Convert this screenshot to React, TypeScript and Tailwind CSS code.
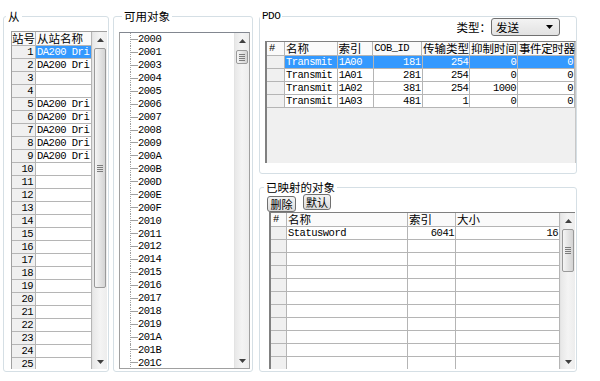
import React from "react";

const CJK = "font-['Noto_Sans_CJK_SC',sans-serif] text-[11.5px]";
const MONO = "font-['Liberation_Mono',monospace] text-[10.5px] tracking-[-0.5px]";
const LINE = "border-[#b5b5b5]";
const GROUP = "m-0 p-0 rounded-[3px] border border-[#d5dfe5] min-w-0";

function Arrow({ down }: { down?: boolean }) {
  return (
    <div className="flex h-[15px] shrink-0 items-center justify-center">
      <svg width="7" height="4" viewBox="0 0 7 4">
        <path d={down ? "M0 0H7L3.5 4Z" : "M0 4H7L3.5 0Z"} fill="#404040" />
      </svg>
    </div>
  );
}

function ScrollBar({ gap, thumb }: { gap: string; thumb: string }) {
  return (
    <div className="flex h-full w-[15px] shrink-0 flex-col border-l border-[#e3e3e3] bg-gradient-to-r from-[#e8e8e8] via-[#f4f4f4] to-[#ededed]">
      <Arrow />
      <div
        className={`${gap} ${thumb} mx-[1px] flex shrink-0 items-center justify-center rounded-[2px] border border-[#9a9a9a] bg-gradient-to-r from-[#f5f5f5] to-[#d4d4d4]`}
      >
        <div className="flex flex-col gap-[1px]">
          {[0, 1, 2, 3].map((i) => (
            <div key={i} className="h-px w-[6px] bg-[#7c7c7c]" />
          ))}
        </div>
      </div>
      <div className="flex-1" />
      <Arrow down />
    </div>
  );
}

const slaves = Array.from({ length: 25 }, (_, i) => ({
  no: i + 1,
  name: [1, 2, 5, 6, 7, 8, 9].includes(i + 1) ? "DA200 Dri" : "",
}));

const objects = [
  "2000", "2001", "2003", "2004", "2005", "2006", "2007", "2008", "2009",
  "200A", "200B", "200D", "200E", "200F", "2010", "2011", "2012", "2014",
  "2015", "2016", "2017", "2018", "2019", "201A", "201B", "201C",
];

const pdoCols = [
  { t: "名称", w: "w-[53px]", right: false, mono: false },
  { t: "索引", w: "w-[36px]", right: false, mono: false },
  { t: "COB_ID", w: "w-[49px]", right: true, mono: true },
  { t: "传输类型", w: "w-[48px]", right: true, mono: false },
  { t: "抑制时间", w: "w-[48px]", right: true, mono: false },
  { t: "事件定时器", w: "w-[57px]", right: true, mono: false },
];

const pdoRows = [
  ["Transmit", "1A00", "181", "254", "0", "0"],
  ["Transmit", "1A01", "281", "254", "0", "0"],
  ["Transmit", "1A02", "381", "254", "1000", "0"],
  ["Transmit", "1A03", "481", "1", "0", "0"],
];

const mapCols = [
  { t: "名称", w: "w-[121px]", right: false },
  { t: "索引", w: "w-[48px]", right: true },
  { t: "大小", w: "w-[104px]", right: true },
];

const mapRows = [["Statusword", "6041", "16"], ...Array.from({ length: 10 }, () => ["", "", ""])];

function Btn({ label, cls }: { label: string; cls: string }) {
  return (
    <div
      className={`${cls} flex h-[16px] items-center justify-center whitespace-nowrap rounded-[3px] border border-[#707070] bg-gradient-to-b from-[#f4f4f4] to-[#dcdcdc] font-['Noto_Sans_CJK_SC',sans-serif] text-[11px] leading-[12px]`}
    >
      {label}
    </div>
  );
}

export default function App() {
  return (
    <div className="flex h-[381px] w-[600px] items-start overflow-hidden bg-white pt-[9px] text-black">
      {/* 从 */}
      <fieldset className={`${GROUP} ml-[3px] h-[363px] w-[106px]`}>
        <legend className={`ml-[2px] px-[2px] leading-[14px] ${CJK}`}>从</legend>
        <div className="ml-[7px] mt-[8px] flex h-[338px] w-[96px] overflow-hidden border-l border-t border-[#a0a0a0]">
          <div className="w-[80px] bg-white">
            <div className="flex h-[14px]">
              <div className={`w-[24px] whitespace-nowrap border-b border-r ${LINE} bg-[#fafafa] leading-[13px] ${CJK}`}>站号</div>
              <div className={`flex-1 whitespace-nowrap border-b border-r ${LINE} bg-[#fafafa] pl-[1px] leading-[13px] ${CJK}`}>
                从站名称
              </div>
            </div>
            {slaves.map((s) => (
              <div key={s.no} className="flex h-[13px]">
                <div className={`w-[24px] border-b border-r ${LINE} bg-[#f0f0f0] pr-[2px] text-right leading-[12px] ${MONO}`}>
                  {s.no}
                </div>
                <div
                  className={`flex-1 overflow-hidden whitespace-nowrap border-b border-r ${LINE} pl-[1px] leading-[12px] ${MONO} ${
                    s.no === 1 ? "bg-[#3399ff] text-white" : ""
                  }`}
                >
                  {s.name}
                </div>
              </div>
            ))}
          </div>
          <ScrollBar gap="mt-[1px]" thumb="h-[240px]" />
        </div>
      </fieldset>

      {/* 可用对象 */}
      <fieldset className={`${GROUP} ml-[4px] h-[363px] w-[140px]`}>
        <legend className={`ml-[8px] px-[2px] leading-[14px] ${CJK}`}>可用对象</legend>
        <div className="ml-[5px] mt-[9px] flex h-[337px] w-[131px] border border-[#a0a0a0] border-t-[#828790]">
          <div className="flex-1 overflow-hidden">
            {objects.map((o) => (
              <div key={o} className="flex h-[12.95px] items-center">
                <div className="ml-[10px] flex h-full w-[8px] items-center border-l border-dotted border-[#a0a0a0]">
                  <div className="w-full border-t border-[#a0a0a0]" />
                </div>
                <span className={`leading-[12px] ${MONO}`}>{o}</span>
              </div>
            ))}
          </div>
          <ScrollBar gap="mt-[2px]" thumb="h-[14px]" />
        </div>
      </fieldset>

      <div className="ml-[6px] flex w-[318px] flex-col">
        {/* PDO */}
        <fieldset className={`${GROUP} h-[165px] w-[318px]`}>
          <legend className="px-[2px] font-['Liberation_Mono',monospace] text-[11px] leading-[14px] tracking-[-0.5px]">PDO</legend>
          <div className="-mt-[5px] flex items-center justify-end pr-[16px]">
            <span className={`${CJK} leading-[14px]`}>类型：</span>
            <div className="flex h-[18px] w-[69px] items-center justify-between rounded-[3px] border border-[#707070] bg-gradient-to-b from-[#f3f3f3] to-[#e2e2e2] pl-[4px] pr-[6px]">
              <span className={`${CJK} leading-[14px]`}>发送</span>
              <svg width="7" height="4" viewBox="0 0 7 4">
                <path d="M0 0H7L3.5 4Z" fill="#000" />
              </svg>
            </div>
          </div>
          <div className="ml-[5px] mt-[5px] h-[122px] w-[311px] overflow-hidden border-l-2 border-r border-t border-[#808080] border-r-[#c8c8c8] bg-[#f0f0f0]">
            <div className="flex h-[14px] bg-[#fafafa]">
              <div className={`w-[18px] border-b border-r ${LINE} pl-[2px] leading-[13px] ${MONO}`}>#</div>
              {pdoCols.map((c) => (
                <div
                  key={c.t}
                  className={`${c.w} whitespace-nowrap border-b border-r ${LINE} pl-[1px] leading-[13px] ${
                    c.mono ? MONO : CJK
                  } ${c.t === "事件定时器" ? "pl-0 tracking-[-0.4px]" : ""}`}
                >
                  {c.t}
                </div>
              ))}
            </div>
            {pdoRows.map((r, ri) => (
              <div key={ri} className="flex h-[13px] bg-white">
                <div className={`w-[18px] border-b border-r ${LINE} bg-[#f0f0f0]`} />
                {r.map((v, ci) => (
                  <div
                    key={ci}
                    className={`${pdoCols[ci].w} overflow-hidden whitespace-nowrap border-b border-r ${LINE} px-[1px] leading-[12px] ${MONO} ${
                      pdoCols[ci].right ? "text-right" : ""
                    } ${ri === 0 ? "bg-[#3399ff] text-white" : ""}`}
                  >
                    {v}
                  </div>
                ))}
              </div>
            ))}
          </div>
        </fieldset>

        {/* 已映射的对象 */}
        <fieldset className={`${GROUP} mt-[6px] h-[192px] w-[318px]`}>
          <legend className={`ml-[4px] px-[2px] leading-[14px] ${CJK}`}>已映射的对象</legend>
          <div className="flex items-start gap-[7px] pl-[7px]">
            <Btn label="删除" cls="mt-[2px] w-[29px]" />
            <Btn label="默认" cls="w-[28px]" />
          </div>
          <div className="ml-[9px] mt-[0px] flex h-[157px] w-[306px] overflow-hidden border-l-2 border-t border-[#808080]">
            <div className="w-[289px] bg-white">
              <div className="flex h-[14px] bg-[#fafafa]">
                <div className={`w-[16px] border-b border-r ${LINE} pl-[2px] leading-[13px] ${MONO}`}>#</div>
                {mapCols.map((c) => (
                  <div key={c.t} className={`${c.w} border-b border-r ${LINE} pl-[1px] leading-[13px] ${CJK}`}>
                    {c.t}
                  </div>
                ))}
              </div>
              {mapRows.map((r, ri) => (
                <div key={ri} className="flex h-[13px]">
                  <div className={`w-[16px] border-b border-r ${LINE} bg-[#f0f0f0]`} />
                  {r.map((v, ci) => (
                    <div
                      key={ci}
                      className={`${mapCols[ci].w} overflow-hidden whitespace-nowrap border-b border-r ${LINE} px-[1px] leading-[12px] ${MONO} ${
                        mapCols[ci].right ? "text-right" : ""
                      }`}
                    >
                      {v}
                    </div>
                  ))}
                </div>
              ))}
            </div>
            <ScrollBar gap="mt-[1px]" thumb="h-[43px]" />
          </div>
        </fieldset>
      </div>
    </div>
  );
}
